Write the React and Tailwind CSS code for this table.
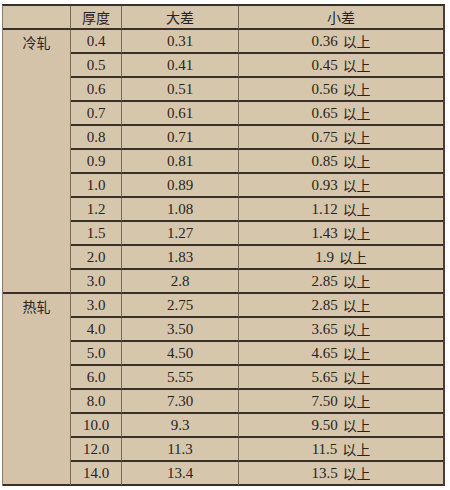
import React from "react";

const cold = [
  ["0.4", "0.31", "0.36"],
  ["0.5", "0.41", "0.45"],
  ["0.6", "0.51", "0.56"],
  ["0.7", "0.61", "0.65"],
  ["0.8", "0.71", "0.75"],
  ["0.9", "0.81", "0.85"],
  ["1.0", "0.89", "0.93"],
  ["1.2", "1.08", "1.12"],
  ["1.5", "1.27", "1.43"],
  ["2.0", "1.83", "1.9"],
  ["3.0", "2.8", "2.85"],
];

const hot = [
  ["3.0", "2.75", "2.85"],
  ["4.0", "3.50", "3.65"],
  ["5.0", "4.50", "4.65"],
  ["6.0", "5.55", "5.65"],
  ["8.0", "7.30", "7.50"],
  ["10.0", "9.3", "9.50"],
  ["12.0", "11.3", "11.5"],
  ["14.0", "13.4", "13.5"],
];

const cell =
  "flex items-center justify-center border-b-2 border-b-[#3a3028] border-r border-r-[#76685a]";
const serif = { fontFamily: '"Liberation Serif", "Noto Sans CJK SC", serif' };
const cjk = { fontFamily: '"Noto Sans CJK SC", "Liberation Serif", sans-serif' };

function Rows({ data }) {
  return data.map(([t, big, small], i) => (
    <React.Fragment key={i}>
      <div className={cell}>{t}</div>
      <div className={cell}>{big}</div>
      <div className={cell + " border-r-0"}>
        {small}
        <span className="ml-[5px] text-[14px]" style={cjk}>以上</span>
      </div>
    </React.Fragment>
  ));
}

export default function App() {
  return (
    <div className="w-[450px] h-[490px] bg-white pt-[4px] pl-[2px]" style={serif}>
      <div className="w-[443px] border-t-2 border-t-[#3a3028] border-l border-l-[#8a7b68] border-r-2 border-r-[#4a3f34] bg-[#d6c6ac] text-[#2a231d] text-[15px]">
        <div className="grid grid-cols-[68px_51px_117px_1fr] grid-rows-[repeat(20,24px)]">
          {/* Header */}
          <div className={cell} />
          <div className={cell + " text-[14px]"} style={cjk}>厚度</div>
          <div className={cell + " text-[14px]"} style={cjk}>大差</div>
          <div className={cell + " border-r-0 text-[14px]"} style={cjk}>小差</div>

          {/* 冷轧 */}
          <div
            className="row-span-11 col-start-1 border-b-2 border-b-[#3a3028] border-r border-r-[#76685a] flex justify-center pt-[2px] text-[14px] bg-[#d4c3a9]"
            style={cjk}
          >
            <span className="h-[20px] leading-[20px]">冷轧</span>
          </div>
          <Rows data={cold.slice(0, 1)} />
          <Rows data={cold.slice(1)} />

          {/* 热轧 */}
          <div
            className="row-span-8 col-start-1 border-b-2 border-b-[#3a3028] border-r border-r-[#76685a] flex justify-center pt-[2px] text-[14px] bg-[#d4c3a9]"
            style={cjk}
          >
            <span className="h-[20px] leading-[20px]">热轧</span>
          </div>
          <Rows data={hot} />
        </div>
      </div>
    </div>
  );
}
